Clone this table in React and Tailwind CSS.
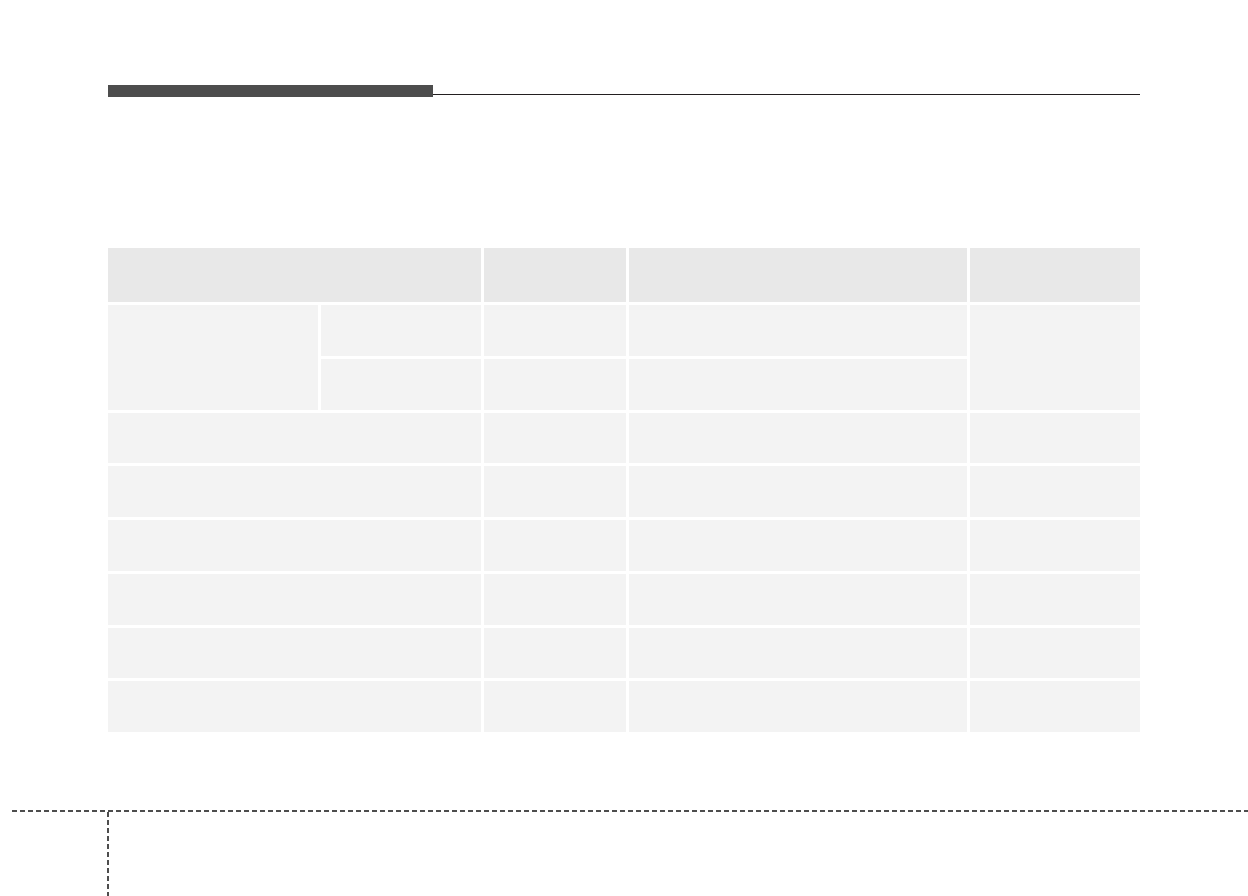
const rows = 8;

const Cell = ({ className = "" }) => <div className={`bg-[#f3f3f3] ${className}`} />;

const App = () => {
  return (
    <div className="w-full h-[896px] bg-white flex flex-col overflow-hidden font-['Liberation_Sans',sans-serif]">
      <div className="px-[108px] pt-[85px]">
        <div className="flex items-start">
          <div className="w-[325px] h-[12px] bg-[#4d4d4d] shrink-0" />
          <div className="flex-1 h-px mt-[9px] bg-[#231f20]" />
        </div>

        <div className="mt-[151px] grid grid-cols-[210px_160px_142px_338px_170px] grid-rows-[54px_repeat(8,50.75px)] gap-[3px]">
          <div className="col-span-2 bg-[#e8e8e8]" />
          <div className="bg-[#e8e8e8]" />
          <div className="bg-[#e8e8e8]" />
          <div className="bg-[#e8e8e8]" />

          <Cell className="row-span-2" />
          <Cell />
          <Cell />
          <Cell />
          <Cell className="row-span-2" />
          <Cell />
          <Cell />
          <Cell />

          {Array.from({ length: rows - 2 }).map((_, i) => (
            <div key={i} className="contents">
              <Cell className="col-span-2" />
              <Cell />
              <Cell />
              <Cell />
            </div>
          ))}
        </div>
      </div>

      <div className="mt-[78px] ml-[12px] h-[2px] bg-[repeating-linear-gradient(to_right,#4d4d4d_0_5px,transparent_5px_8px)]" />
      <div className="ml-[107px] w-[2px] flex-1 bg-[repeating-linear-gradient(to_bottom,#4d4d4d_0_5px,transparent_5px_8px)]" />
    </div>
  );
};

export default App;
